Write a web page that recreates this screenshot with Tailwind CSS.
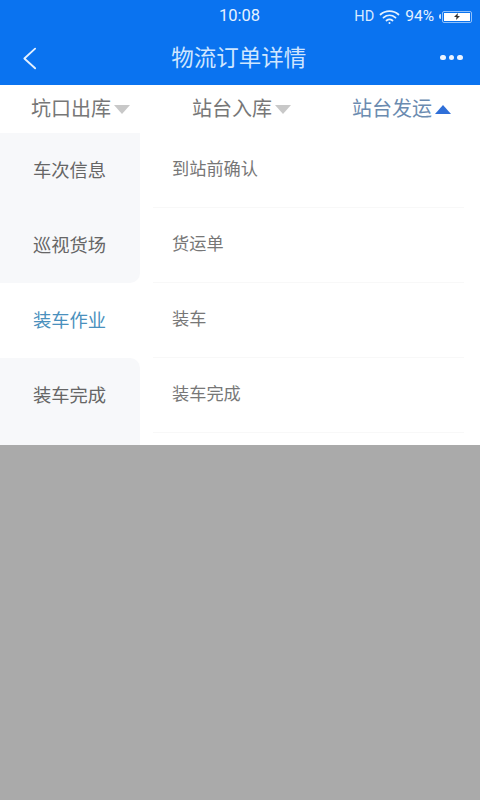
<!DOCTYPE html>
<html lang="zh">
 <head>
  <meta charset="utf-8"/>
  <title>物流订单详情</title>
  <script src="https://cdn.jsdelivr.net/npm/@tailwindcss/browser@4"></script>
 </head>
 <body class="w-[480px] h-[800px] overflow-hidden bg-[#aaaaaa] font-['Roboto','Noto_Sans_CJK_SC',sans-serif]">
  <header class="h-[85px] bg-[#0a73f0] text-white flex flex-col">
   <div class="h-[33px] relative flex items-center justify-end pr-[8px]">
    <span class="absolute left-[219px] top-[5px] text-[16.500px] leading-[22px] text-[#e6f2ff]">10:08</span>
    <span class="text-[14.500px] text-[#d9ebff] mr-[5px]">HD</span>
    <svg class="w-[21px] h-[16px] mr-[5px]" viewBox="0 0 20 16" fill="none" stroke="#e6f2ff" stroke-width="1.8" stroke-linecap="round">
     <path d="M1 5.500C6 1 14 1 19 5.500"/>
     <path d="M4 8.600C7.600 5.600 12.400 5.600 16 8.600"/>
     <path d="M7 11.500C8.800 10.200 11.200 10.200 13 11.500"/>
     <circle cx="10" cy="14" r="1" fill="#e6f2ff" stroke="none"/>
    </svg>
    <span class="text-[15.500px] text-[#e6f2ff] mr-[5px]">94%</span>
    <div class="w-[2px] h-[5px] bg-[#cfe4ff] rounded-l-sm"></div>
    <div class="w-[30px] h-[12px] ml-[1px] p-[1px] border border-[#8fc0fa] rounded-[2px]">
     <div class="w-full h-full bg-white flex items-center justify-center">
      <svg class="w-[8px] h-[7px]" viewBox="0 0 8 7"><path d="M5 0L1 4H3.500L3 7L7 3H4.500Z" fill="#333"/></svg>
     </div>
    </div>
   </div>
   <div class="flex-1 flex items-center justify-between pl-[22px] pr-[17px] pb-[3px]">
    <svg class="w-[15px] h-[24px]" viewBox="0 0 16 24" fill="none" stroke="#e3f0ff" stroke-width="2" stroke-linecap="round" stroke-linejoin="round">
     <path d="M14 2L2.500 12.500L14 23"/>
    </svg>
    <h1 class="text-[22.500px] leading-[28px] text-[#cfe6ff]">物流订单详情</h1>
    <div class="flex gap-[3px]">
     <span class="w-[5.500px] h-[5.500px] rounded-full bg-[#e9f3ff]"></span>
     <span class="w-[5.500px] h-[5.500px] rounded-full bg-[#e9f3ff]"></span>
     <span class="w-[5.500px] h-[5.500px] rounded-full bg-[#e9f3ff]"></span>
    </div>
   </div>
  </header>
  <nav class="h-[48px] bg-white flex items-center text-[20px] leading-[26px]">
   <div class="w-[160px] pl-[31px] flex items-center text-[#777777]">
    <span>坑口出库</span>
    <span class="ml-[3px] w-0 h-0 border-l-[8px] border-r-[8px] border-t-[9px] border-l-transparent border-r-transparent border-t-[#c8c8c8]"></span>
   </div>
   <div class="w-[160px] pl-[32px] flex items-center text-[#777777]">
    <span>站台入库</span>
    <span class="ml-[3px] w-0 h-0 border-l-[8px] border-r-[8px] border-t-[9px] border-l-transparent border-r-transparent border-t-[#c8c8c8]"></span>
   </div>
   <div class="w-[160px] pl-[32px] flex items-center text-[#6b8bb0]">
    <span>站台发运</span>
    <span class="ml-[3px] w-0 h-0 border-l-[8px] border-r-[8px] border-b-[9px] border-l-transparent border-r-transparent border-b-[#2f6fd8]"></span>
   </div>
  </nav>
  <main class="h-[312px] bg-white flex">
   <div class="w-[140px] flex flex-col text-[18.300px] text-[#666666]">
    <div class="h-[150px] bg-[#f7f8fa] rounded-br-[10px] pl-[33px] flex flex-col">
     <div class="h-[75px] flex items-center">车次信息</div>
     <div class="h-[75px] flex items-center">巡视货场</div>
    </div>
    <div class="h-[75px] bg-white pl-[33px] flex items-center text-[#4a90bd]">装车作业</div>
    <div class="h-[87px] bg-[#f7f8fa] rounded-tr-[10px] pl-[33px] pb-[12px] flex items-center">装车完成</div>
   </div>
   <ul class="flex-1 pl-[13px] pr-[16px] text-[17.200px] text-[#777777]">
    <li class="h-[75px] pl-[19px] flex items-center border-b border-[#f8f8f8]">到站前确认</li>
    <li class="h-[75px] pl-[19px] flex items-center border-b border-[#f8f8f8]">货运单</li>
    <li class="h-[75px] pl-[19px] flex items-center border-b border-[#f8f8f8]">装车</li>
    <li class="h-[75px] pl-[19px] flex items-center border-b border-[#f8f8f8]">装车完成</li>
   </ul>
  </main>
 </body>
</html>
